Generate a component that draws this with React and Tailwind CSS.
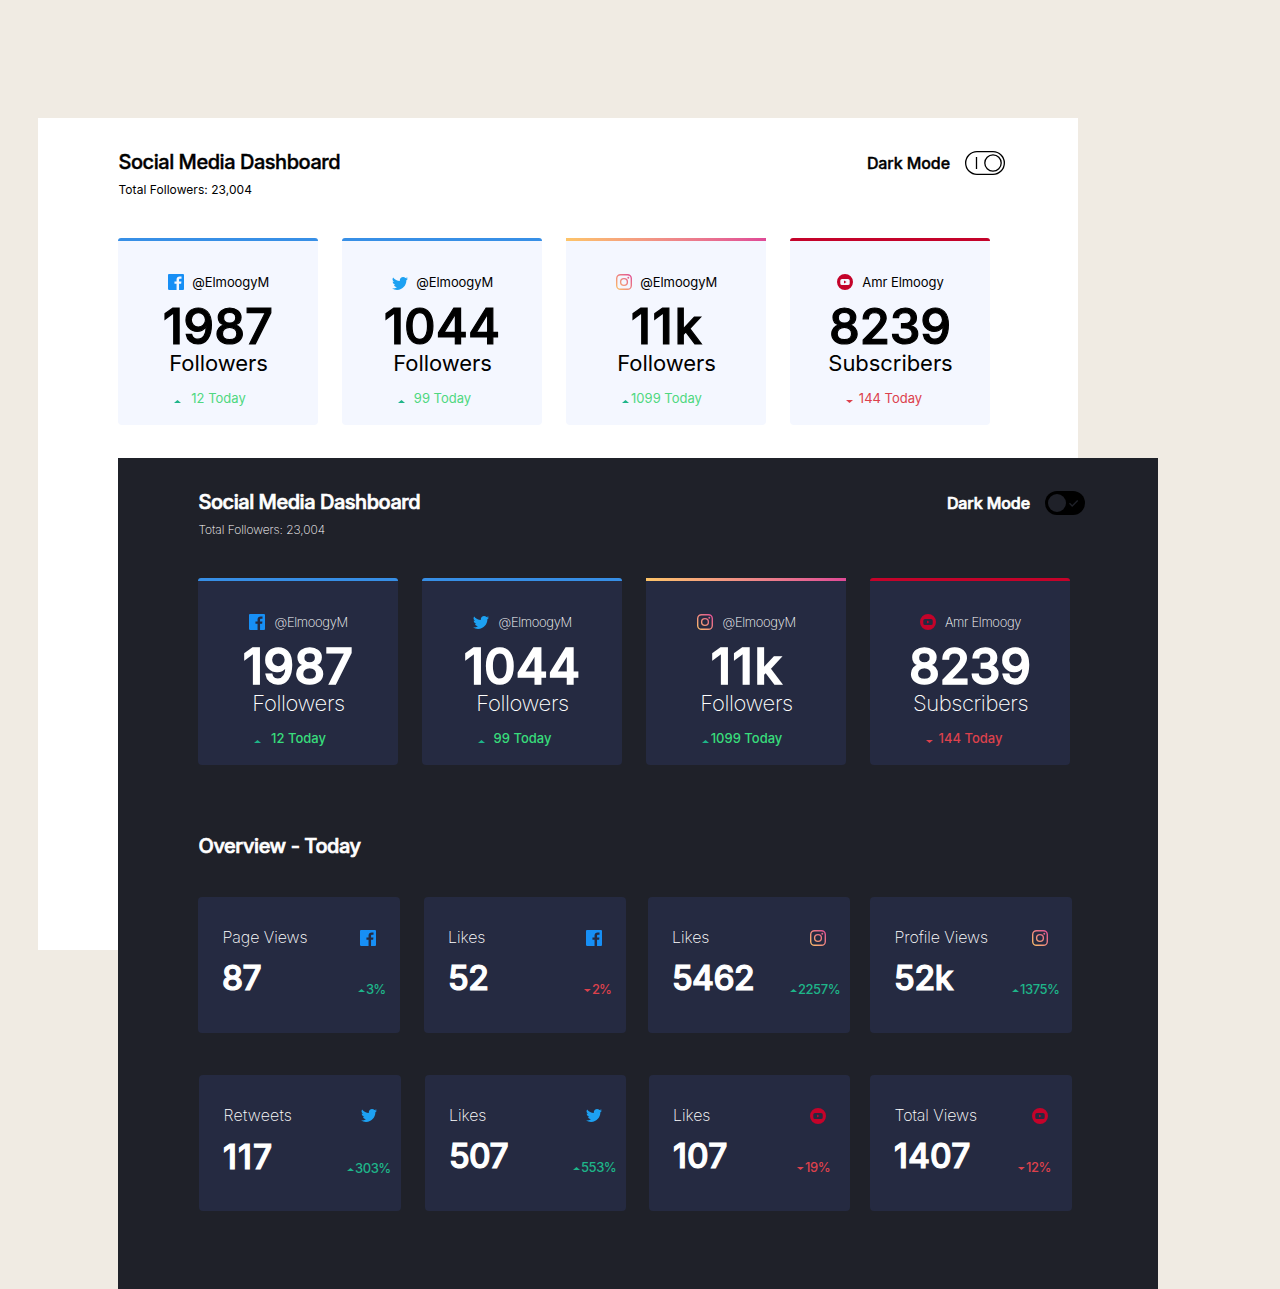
const FONT = "font-['Inter','Liberation_Sans',sans-serif]";

function Facebook() {
  return (
    <svg className="block h-4 w-4" viewBox="0 0 20 20" fill="#178FF5">
      <path d="M18.896 0H1.104C.494 0 0 .494 0 1.104v17.793C0 19.506.494 20 1.104 20h9.58v-7.745H8.076V9.237h2.606V7.01c0-2.583 1.578-3.99 3.883-3.99 1.104 0 2.052.082 2.329.119v2.7h-1.598c-1.254 0-1.496.597-1.496 1.47v1.928h2.989l-.39 3.018h-2.6V20h5.098c.608 0 1.102-.494 1.102-1.104V1.104C20 .494 19.506 0 18.896 0z" />
    </svg>
  );
}

function Twitter() {
  return (
    <svg className="block h-4 w-4" viewBox="0 -2.2 20 20" fill="#1DA1F2">
      <path d="M20 2.172a8.192 8.192 0 01-2.357.646 4.11 4.11 0 001.805-2.27 8.22 8.22 0 01-2.606.996A4.096 4.096 0 0013.847.248c-2.65 0-4.596 2.472-3.998 5.037A11.648 11.648 0 011.392 1a4.109 4.109 0 001.27 5.478 4.086 4.086 0 01-1.858-.513c-.045 1.9 1.318 3.679 3.291 4.075a4.113 4.113 0 01-1.853.07 4.106 4.106 0 003.833 2.849A8.25 8.25 0 010 14.658a11.616 11.616 0 006.29 1.843c7.618 0 11.922-6.434 11.662-12.205A8.354 8.354 0 0020 2.172z" />
    </svg>
  );
}

function Instagram() {
  return (
    <svg className="block h-4 w-4" viewBox="0 0 16 16" fill="none">
      <defs>
        <linearGradient id="ig" x1="0" y1="16" x2="16" y2="0" gradientUnits="userSpaceOnUse">
          <stop stopColor="#FDC468" />
          <stop offset="1" stopColor="#DF4996" />
        </linearGradient>
      </defs>
      <rect x=".7" y=".7" width="14.6" height="14.6" rx="3.9" stroke="url(#ig)" strokeWidth="1.4" />
      <circle cx="8" cy="8" r="3.4" stroke="url(#ig)" strokeWidth="1.4" />
      <circle cx="12.3" cy="3.7" r=".95" fill="url(#ig)" />
    </svg>
  );
}

function Youtube() {
  return (
    <svg className="block h-4 w-4" viewBox="0 0 16 16" fill="#C4032A">
      <path
        fillRule="evenodd"
        d="M8 0a8 8 0 110 16A8 8 0 018 0zM5 5Q3.300 5 3.300 6.600v2.800Q3.300 11 5 11h6q1.700 0 1.700-1.600V6.600Q12.700 5 11 5z"
      />
      <path d="M7 6.600v2.800L9.500 8z" />
    </svg>
  );
}

const ICONS = { fb: Facebook, tw: Twitter, ig: Instagram, yt: Youtube };

function Arrow({ down }) {
  return (
    <svg className="block h-[3px] w-[7px] shrink-0" viewBox="0 0 7 3">
      {down ? <path d="M0 0h7L3.500 3z" fill="#DC414C" /> : <path d="M0 3h7L3.500 0z" fill="#1EB589" />}
    </svg>
  );
}

function Toggle({ on }) {
  return on ? (
    <svg className="block h-6 w-10" viewBox="0 0 40 24" fill="none">
      <rect width="40" height="24" rx="12" fill="#000" />
      <circle cx="12" cy="12" r="9" fill="#1F2129" />
      <path d="M24.500 12.300l2.700 2.700 5.500-5.500" stroke="#1F2129" strokeWidth="1.300" />
    </svg>
  ) : (
    <svg className="block h-6 w-10" viewBox="0 0 40 24" fill="none" stroke="#000" strokeWidth="1.300">
      <rect x=".65" y=".65" width="38.700" height="22.700" rx="11.350" />
      <circle cx="28" cy="12" r="8.200" />
      <path d="M11.500 6v12" />
    </svg>
  );
}

const PROFILES = [
  { icon: 'fb', name: '@ElmoogyM', count: '1987', unit: 'Followers', today: '12 Today', bar: 'bg-[#378FE6] rounded-t' },
  { icon: 'tw', name: '@ElmoogyM', count: '1044', unit: 'Followers', today: '99 Today', bar: 'bg-[#378FE6] rounded-t' },
  { icon: 'ig', name: '@ElmoogyM', count: '11k', unit: 'Followers', today: '1099 Today', bar: 'bg-linear-to-r from-[#FDC468] to-[#DF4996]', track: 'tracking-[1.500px] pl-0.5' },
  { icon: 'yt', name: 'Amr Elmoogy', count: '8239', unit: 'Subscribers', today: '144 Today', bar: 'bg-[#C4032A] rounded-t', track: 'tracking-[-0.200px]', down: true },
];

function ProfileCard({ p, dark }) {
  const Icon = ICONS[p.icon];
  const tone = p.down ? 'text-[#DC414C]' : dark ? 'text-[#38DC7B]' : 'text-[#4FD880]';
  return (
    <div className={`h-[187px] w-[200px] ${p.icon === 'ig' ? 'rounded-b' : 'rounded'} ${dark ? 'bg-[#252A41]' : 'bg-[#F4F7FF]'}`}>
      <div className={`h-[3px] ${p.bar}`} />
      <div className={`mt-[33px] flex h-4 items-center justify-center ${dark ? (p.down ? 'gap-[9px] pl-px' : 'gap-[9.500px] pl-px') : p.down ? 'gap-[9px] pl-px' : 'gap-[8.500px] pl-px'}`}>
        <div className={p.icon === 'tw' && !dark ? 'pt-0.5' : ''}>
          <Icon />
        </div>
        <span className={`text-[13px] leading-4 ${dark ? 'font-extralight tracking-[-0.340px]' : 'font-normal tracking-[-0.060px]'}`}>{p.name}</span>
      </div>
      <div className={`mt-3 h-[49px] text-center text-[49px] font-medium leading-[49px] ${p.track || 'tracking-[0.100px]'} ${dark ? '[-webkit-text-stroke:1.6px_#fff]' : '[-webkit-text-stroke:1.2px_#000]'}`}>{p.count}</div>
      <div className={`h-6 pl-px text-center text-[22px] leading-6 ${dark ? 'font-extralight tracking-[-0.400px]' : 'font-normal tracking-[-0.050px]'}`}>{p.unit}</div>
      <div className={`mt-[13px] grid h-5 text-center text-[13px] leading-5 ${dark ? 'font-medium' : 'font-normal'} ${tone}`}>
        <div className="col-start-1 row-start-1 pl-14 pt-3">
          <Arrow down={p.down} />
        </div>
        <span className="col-start-1 row-start-1 pl-px">{p.today}</span>
      </div>
    </div>
  );
}

function Top({ dark }) {
  return (
    <>
      <header className="flex justify-between pr-[73px] pt-[33px]">
        <div>
          <h1 className={`pl-[0.500px] text-[20px] font-medium leading-[23px] tracking-[-0.460px] ${dark ? '[-webkit-text-stroke:0.7px_#fff]' : '[-webkit-text-stroke:0.4px_#000]'}`}>Social Media Dashboard</h1>
          <p className={`mt-2 pl-[0.500px] text-[12px] leading-4 ${dark ? 'font-extralight tracking-[-0.050px]' : 'font-normal tracking-[0.050px]'}`}>Total Followers: 23,004</p>
        </div>
        <div className="flex h-6 items-center gap-[15px]">
          <span className={`text-[16px] font-medium leading-6 tracking-[-0.080px] ${dark ? '[-webkit-text-stroke:0.7px_#fff]' : '[-webkit-text-stroke:0.4px_#000]'}`}>Dark Mode</span>
          <Toggle on={dark} />
        </div>
      </header>
      <section className="mt-10 flex gap-6">
        {PROFILES.map((p) => (
          <ProfileCard key={p.count} p={p} dark={dark} />
        ))}
      </section>
    </>
  );
}

const STATS = [
  [
    { icon: 'fb', label: 'Page Views', n: '87', pct: '3%', w: 'w-[202px]', at: 'left-[160px]', track: 'tracking-[-0.500px]', tight: true },
    { icon: 'fb', label: 'Likes', n: '52', pct: '2%', down: true, w: 'ml-6 w-[202px]', at: 'left-[160px]', track: 'tracking-[-0.500px]', tight: true },
    { icon: 'ig', label: 'Likes', n: '5462', pct: '2257%', w: 'ml-[22px] w-[202px]', at: 'left-[142px]', track: 'tracking-[-0.600px]' },
    { icon: 'ig', label: 'Profile Views', n: '52k', pct: '1375%', w: 'ml-5 w-[202px]', at: 'left-[142px]', track: 'tracking-[-0.300px]' },
  ],
  [
    { icon: 'tw', label: 'Retweets', n: '117', pct: '303%', w: 'ml-px w-[202px]', at: 'left-[148px]', low: true, track: 'tracking-[1.100px]', nudge: 'pb-[2px]', wide: true },
    { icon: 'tw', label: 'Likes', n: '507', pct: '553%', w: 'ml-6 w-[201px]', at: 'left-[148px]', track: 'tracking-[-0.600px]', nudge: 'pb-[3px]' },
    { icon: 'yt', label: 'Likes', n: '107', pct: '19%', down: true, w: 'ml-[23px] w-[201px]', at: 'left-[148px]', track: 'tracking-[0.200px]' },
    { icon: 'yt', label: 'Total Views', n: '1407', pct: '12%', down: true, w: 'ml-5 w-[202px]', at: 'left-[148px]', track: 'tracking-[0.100px]' },
  ],
];

function StatCard({ s }) {
  const Icon = ICONS[s.icon];
  return (
    <div className={`relative h-[136px] rounded bg-[#252A41] pt-[31px] ${s.w}`}>
      <div className={`flex h-5 items-center justify-between pr-6 ${s.label === 'Likes' ? 'pl-6' : 'pl-[24.500px]'}`}>
        <span className={`pb-0.5 text-[16px] font-extralight leading-5 ${s.wide ? 'tracking-[0.180px]' : 'tracking-[-0.080px]'}`}>{s.label}</span>
        <div className={s.nudge}>
          <Icon />
        </div>
      </div>
      <div className={`ml-6 h-10 text-[33.500px] font-medium leading-10 [-webkit-text-stroke:1.2px_#fff] ${s.track} ${s.low ? 'mt-[11px]' : 'mt-[10px]'}`}>{s.n}</div>
      <div
        className={`absolute flex h-4 items-center gap-px text-[13px] font-medium leading-4 ${s.tight ? 'tracking-[-1px]' : 'tracking-[-0.450px]'} ${s.at} ${s.low ? 'top-[85px]' : 'top-[84px]'} ${s.down ? 'text-[#DC414C]' : 'text-[#1EB589]'}`}
      >
        <div className="pt-[3px]">
          <Arrow down={s.down} />
        </div>
        <span>{s.pct}</span>
      </div>
    </div>
  );
}

export default function App() {
  return (
    <div className={`h-[1289px] w-[1280px] overflow-hidden bg-[#F0EBE3] pt-[118px] ${FONT}`}>
      <main className="ml-[38px] h-[832px] w-[1040px] bg-white pl-20 text-black">
        <Top />
      </main>
      <main className="relative ml-[118px] -mt-[492px] h-[831px] w-[1040px] bg-[#1F2129] pl-20 text-white">
        <Top dark />
        <h2 className="mt-[69px] pl-[0.500px] text-[20px] font-medium leading-6 tracking-[-0.440px] [-webkit-text-stroke:0.7px_#fff]">Overview - Today</h2>
        <section className="mt-[39px] flex">
          {STATS[0].map((s) => (
            <StatCard key={s.n} s={s} />
          ))}
        </section>
        <section className="mt-[42px] flex">
          {STATS[1].map((s) => (
            <StatCard key={s.n} s={s} />
          ))}
        </section>
      </main>
    </div>
  );
}
